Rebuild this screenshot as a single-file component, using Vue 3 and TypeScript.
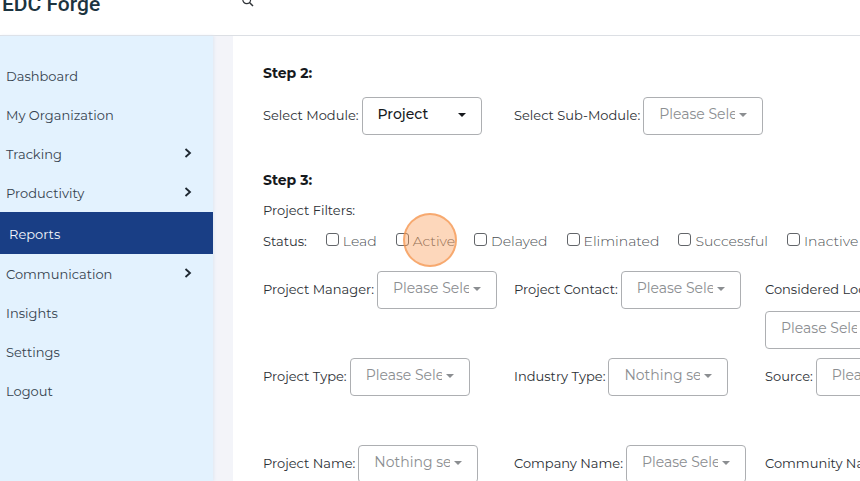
<script setup lang="ts">
import { ref } from 'vue'

interface NavItem {
  label: string
  expandable?: boolean
  active?: boolean
}

interface Field {
  id: string
  label: string
  placeholder: string
}

const navItems: NavItem[] = [
  { label: 'Dashboard' },
  { label: 'My Organization' },
  { label: 'Tracking', expandable: true },
  { label: 'Productivity', expandable: true },
  { label: 'Reports', active: true },
  { label: 'Communication', expandable: true },
  { label: 'Insights' },
  { label: 'Settings' },
  { label: 'Logout' },
]

const moduleFields: Field[] = [
  { id: 'module', label: 'Select Module:', placeholder: 'Project' },
  { id: 'sub-module', label: 'Select Sub-Module:', placeholder: 'Please Select' },
]

const filterFields: Field[] = [
  { id: 'manager', label: 'Project Manager:', placeholder: 'Please Select' },
  { id: 'contact', label: 'Project Contact:', placeholder: 'Please Select' },
  { id: 'location', label: 'Considered Locations:', placeholder: 'Please Select' },
  { id: 'type', label: 'Project Type:', placeholder: 'Please Select' },
  { id: 'industry', label: 'Industry Type:', placeholder: 'Nothing selected' },
  { id: 'source', label: 'Source:', placeholder: 'Please Select' },
  { id: 'name', label: 'Project Name:', placeholder: 'Nothing selected' },
  { id: 'company', label: 'Company Name:', placeholder: 'Please Select' },
  { id: 'community', label: 'Community Name:', placeholder: 'Please Select' },
]

const statuses = ['Lead', 'Active', 'Delayed', 'Eliminated', 'Successful', 'Inactive']
const highlighted = 'Active'
const selected = ref<string[]>([])
</script>

<template>
  <div class="page">
    <header class="topbar">
      <a class="logo" href="#">EDC Forge</a>
      <button class="search" type="button" aria-label="Search">
        <svg viewBox="0 0 12 12" width="12" height="12" fill="none" stroke="#2f3337">
          <circle cx="4.7" cy="4.7" r="3.9" stroke-width="1.2" />
          <path d="M7.5 7.5 L11 11" stroke-width="1.5" />
        </svg>
      </button>
    </header>

    <div class="body">
      <nav class="sidebar">
        <a
          v-for="item in navItems"
          :key="item.label"
          href="#"
          class="nav-item"
          :class="{ active: item.active }"
        >
          <span>{{ item.label }}</span>
          <svg v-if="item.expandable" class="chevron" viewBox="0 0 8 12" width="8" height="12">
            <path d="M1.5 1 L6 5 L1.5 9" fill="none" stroke="#1d2730" stroke-width="1.8" />
          </svg>
        </a>
      </nav>

      <main class="content">
        <h2 class="step">Step 2:</h2>
        <div class="fields modules">
          <div v-for="field in moduleFields" :key="field.id" class="field">
            <label :for="field.id">{{ field.label }}</label>
            <span class="picker" :class="{ chosen: field.id === 'module' }">
              <select :id="field.id">
                <option>{{ field.placeholder }}</option>
              </select>
              <svg class="caret" viewBox="0 0 8 4" width="8" height="4">
                <path d="M0 0 H8 L4 4 Z" fill="currentColor" />
              </svg>
            </span>
          </div>
        </div>

        <h2 class="step">Step 3:</h2>
        <p class="caption">Project Filters:</p>
        <div class="statuses">
          <span class="status-title">Status:</span>
          <label v-for="status in statuses" :key="status" class="status">
            <input v-model="selected" type="checkbox" :value="status" />
            <span>{{ status }}</span>
            <i v-if="status === highlighted" class="click-marker" aria-hidden="true"></i>
          </label>
        </div>

        <div class="fields filters">
          <div v-for="field in filterFields" :key="field.id" class="field">
            <label :for="field.id">{{ field.label }}</label>
            <span class="picker">
              <select :id="field.id">
                <option>{{ field.placeholder }}</option>
              </select>
              <svg class="caret" viewBox="0 0 8 4" width="8" height="4">
                <path d="M0 0 H8 L4 4 Z" fill="currentColor" />
              </svg>
            </span>
          </div>
        </div>
      </main>
    </div>
  </div>
</template>

<style>
body {
  overflow: hidden;
}
</style>

<style scoped>
.page {
  display: flex;
  flex-direction: column;
  height: 100vh;
  overflow: hidden;
  background: #fff;
  color: #2c3035;
  font-family: Montserrat, Inter, 'Liberation Sans', sans-serif;
  font-size: 13px;
  line-height: 20px;
}

.topbar {
  display: flex;
  flex: none;
  align-items: flex-start;
  height: 35px;
  padding-left: 2px;
  overflow: hidden;
  border-bottom: 1px solid #dcdfe4;
}

.logo {
  width: 240px;
  margin-top: -11px;
  color: #1c3440;
  font-family: Roboto, 'Open Sans', sans-serif;
  font-size: 21px;
  font-weight: 500;
  line-height: 30px;
  text-decoration: none;
}

.search {
  display: block;
  margin-top: -5px;
  padding: 0;
  border: 0;
  background: none;
}

.search svg {
  display: block;
}

.body {
  display: flex;
  flex: 1;
  min-height: 0;
  background: #f3f4f9;
}

.sidebar {
  flex: none;
  width: 213px;
  padding-top: 20px;
  background: #e3f2fe;
  box-shadow: 1px 0 3px #dfe7f1;
}

.nav-item {
  display: flex;
  box-sizing: border-box;
  align-items: center;
  justify-content: space-between;
  height: 39px;
  padding: 0 21px 0 6px;
  color: #36434f;
  text-decoration: none;
}

.nav-item.active {
  height: 42px;
  padding-top: 2px;
  padding-left: 9px;
  background: #193e85;
  color: #f4f7fc;
}

.content {
  flex: 1;
  min-width: 0;
  margin-left: 20px;
  padding: 27px 0 0 30px;
  overflow: hidden;
  background: #fff;
}

.step {
  margin: 0;
  color: #16191d;
  font-size: 14px;
  font-weight: 700;
  line-height: 20px;
}

.fields {
  display: grid;
  grid-template-columns: repeat(3, minmax(251px, 1fr));
}

.modules {
  margin: 14px 0 35px;
}

.filters {
  grid-auto-rows: 78px;
  row-gap: 9px;
  margin-top: 20px;
}

.field {
  display: flex;
  flex-wrap: wrap;
  align-content: flex-start;
  align-items: flex-start;
  gap: 4px 3px;
}

.field label {
  line-height: 36px;
}

.picker {
  position: relative;
  display: block;
  width: 120px;
  color: #8b8e91;
}

.picker.chosen {
  color: #16191d;
}

.picker select {
  display: block;
  box-sizing: border-box;
  width: 100%;
  height: 38px;
  margin: 0;
  padding: 0 27px 4px 15px;
  appearance: none;
  border: 1px solid #adafb2;
  border-radius: 4px;
  background: #fff;
  color: inherit;
  font-family: inherit;
  font-size: 14px;
}

.picker.chosen select {
  font-weight: 500;
}

.caret {
  position: absolute;
  top: 16px;
  right: 16px;
}

.caption {
  margin: 10px 0 11px;
}

.statuses {
  display: flex;
  gap: 19px;
  white-space: nowrap;
}

.status {
  position: relative;
  display: flex;
  align-items: center;
  gap: 4px;
  color: #4c5054;
  font-size: 14px;
  font-weight: 300;
}

.status input {
  width: 13px;
  height: 13px;
  margin: 0 0 3px;
  appearance: none;
  border: 1px solid #626569;
  border-radius: 3px;
  background: #fff;
}

.status input:checked {
  background: #193e85;
}

.click-marker {
  position: absolute;
  top: -18px;
  left: 7px;
  box-sizing: border-box;
  width: 54px;
  height: 54px;
  border: 2px solid rgba(243, 145, 70, 0.65);
  border-radius: 50%;
  background: rgba(250, 155, 85, 0.4);
  pointer-events: none;
}
</style>
